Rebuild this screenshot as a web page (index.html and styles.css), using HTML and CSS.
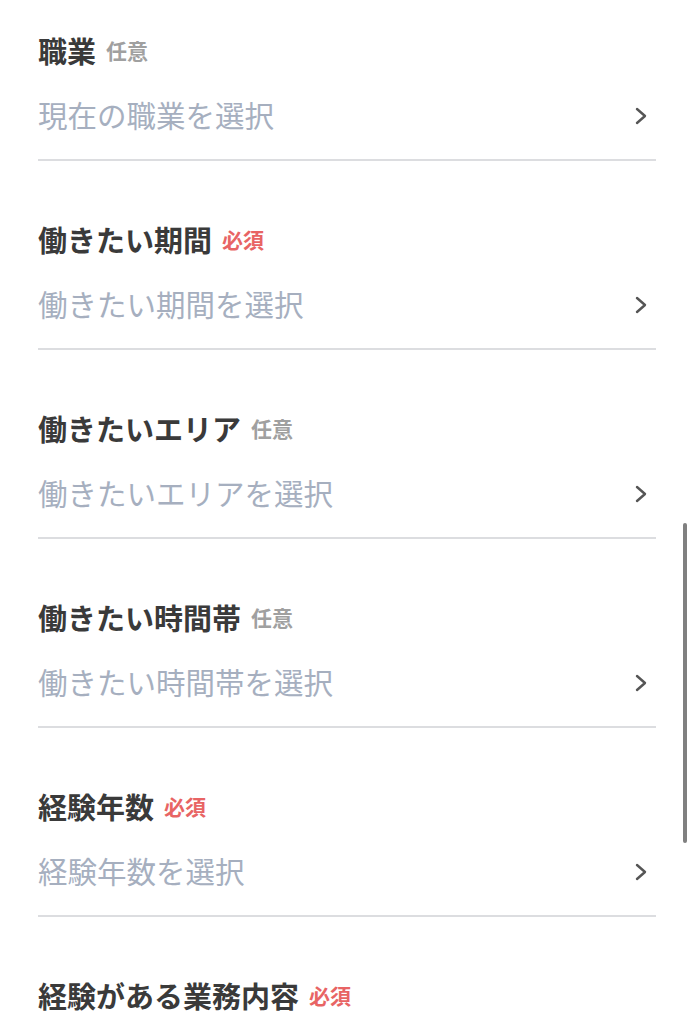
FILE: index.html
```html
<!DOCTYPE html>
<html lang="ja">
<head>
  <meta charset="UTF-8" />
  <meta name="viewport" content="width=device-width, initial-scale=1.0" />
  <title>プロフィール入力</title>
  <link rel="stylesheet" href="styles.css">
</head>
<body>
  <div class="form">
    <div class="field">
      <div class="label">職業<span class="tag">任意</span></div>
      <div class="select">
        <span class="placeholder">現在の職業を選択</span>
        <svg class="chevron" viewBox="0 0 12 18"><path d="M2 2l8 7-8 7" /></svg>
      </div>
    </div>

    <div class="field">
      <div class="label">働きたい期間<span class="tag required">必須</span></div>
      <div class="select">
        <span class="placeholder">働きたい期間を選択</span>
        <svg class="chevron" viewBox="0 0 12 18"><path d="M2 2l8 7-8 7" /></svg>
      </div>
    </div>

    <div class="field">
      <div class="label">働きたいエリア<span class="tag">任意</span></div>
      <div class="select">
        <span class="placeholder">働きたいエリアを選択</span>
        <svg class="chevron" viewBox="0 0 12 18"><path d="M2 2l8 7-8 7" /></svg>
      </div>
    </div>

    <div class="field">
      <div class="label">働きたい時間帯<span class="tag">任意</span></div>
      <div class="select">
        <span class="placeholder">働きたい時間帯を選択</span>
        <svg class="chevron" viewBox="0 0 12 18"><path d="M2 2l8 7-8 7" /></svg>
      </div>
    </div>

    <div class="field">
      <div class="label">経験年数<span class="tag required">必須</span></div>
      <div class="select">
        <span class="placeholder">経験年数を選択</span>
        <svg class="chevron" viewBox="0 0 12 18"><path d="M2 2l8 7-8 7" /></svg>
      </div>
    </div>

    <div class="field">
      <div class="label">経験がある業務内容<span class="tag required">必須</span></div>
    </div>
  </div>

  <div class="scrollbar"></div>
</body>
</html>
```

FILE: styles.css
```css
body {
  font-family: "Noto Sans CJK JP", "Noto Sans", sans-serif;
  background-color: #ffffff;
  color: #333333;
  margin: 0;
  overflow: hidden;
}
.form {
  padding: 30px 38px 0 38px;
}
.field {
  margin-bottom: 58px;
}
.label {
  font-size: 29px;
  font-weight: bold;
  line-height: 40px;
  height: 40px;
  color: #3a3a3a;
  display: flex;
  align-items: center;
}
.tag {
  font-size: 21px;
  font-weight: bold;
  color: #a0a0a0;
  margin-left: 10px;
}
.tag.required {
  color: #e86464;
}
.select {
  margin-top: 24px;
  padding-bottom: 25px;
  border-bottom: 2px solid #dcdde0;
  display: flex;
  align-items: center;
  justify-content: space-between;
}
.placeholder {
  font-size: 29.5px;
  line-height: 40px;
  color: #a6afbf;
}
.chevron {
  width: 12px;
  height: 18px;
  margin-right: 9px;
  margin-top: 4px;
  fill: none;
  stroke: #555555;
  stroke-width: 2.4;
  stroke-linecap: round;
  stroke-linejoin: round;
}
.scrollbar {
  position: fixed;
  right: 7px;
  top: 523px;
  width: 4px;
  height: 320px;
  border-radius: 2px;
  background: #808080;
}
```
